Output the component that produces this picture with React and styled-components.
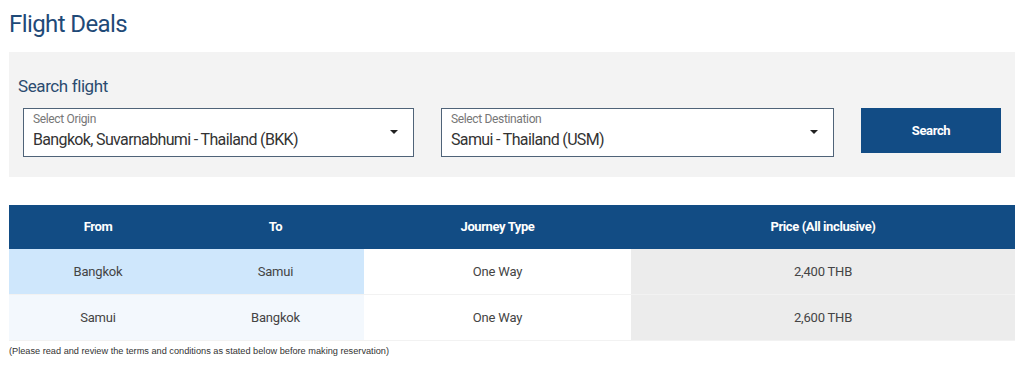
import React from "react";
import styled, { createGlobalStyle } from "styled-components";

const Global = createGlobalStyle`
  html, body { margin: 0; padding: 0; background: #fff; }
  body { font-family: Roboto, "Liberation Sans", sans-serif; }
`;

const Page = styled.div`
  padding: 9px 9px 0 9px;
  width: 1006px;
`;

const Title = styled.h1`
  margin: 0;
  font-weight: 400;
  font-size: 24px;
  line-height: 30px;
  letter-spacing: -0.6px;
  color: #1f4a78;
  height: 43px;
`;

const SearchPanel = styled.section`
  background: #f3f3f3;
  height: 125px;
  box-sizing: border-box;
  padding: 24px 14px 0 9px;
`;

const PanelTitle = styled.h2`
  margin: 0;
  font-weight: 400;
  font-size: 17px;
  line-height: 20px;
  letter-spacing: -0.4px;
  color: #2b4b6f;
  height: 32px;
`;

const FormRow = styled.div`
  display: flex;
  align-items: flex-start;
  padding-left: 5px;
`;

const Select = styled.div`
  position: relative;
  width: ${(p) => p.$w}px;
  height: 49px;
  box-sizing: border-box;
  border: 1px solid #4f6378;
  background: #fff;
  margin-right: ${(p) => p.$mr}px;
  padding: 3px 0 0 9px;
`;

const SelectLabel = styled.div`
  font-size: 12px;
  line-height: 14px;
  color: #777;
  letter-spacing: -0.35px;
`;

const SelectValue = styled.div`
  font-size: 16px;
  line-height: 20px;
  margin-top: 4px;
  color: #333;
  letter-spacing: -0.65px;
`;

const Caret = styled.span`
  position: absolute;
  right: 15px;
  top: 21px;
  width: 0;
  height: 0;
  border-left: 4px solid transparent;
  border-right: 4px solid transparent;
  border-top: 4px solid #222;
`;

const SearchButton = styled.button`
  width: 140px;
  height: 45px;
  border: none;
  background: #124c85;
  color: #fff;
  font-family: Roboto, "Liberation Sans", sans-serif;
  font-weight: 700;
  font-size: 13px;
  letter-spacing: -0.4px;
  cursor: pointer;
`;

const Table = styled.table`
  margin-top: 28px;
  width: 1006px;
  border-collapse: collapse;
  table-layout: fixed;
`;

const Th = styled.th`
  background: #124c84;
  color: #fff;
  height: 44px;
  box-sizing: border-box;
  font-weight: 700;
  font-size: 13px;
  letter-spacing: -0.4px;
  padding: 0 0 2px 0;
  text-align: center;
`;

const Td = styled.td`
  background: ${(p) => p.$bg};
  height: 45px;
  padding: 0;
  text-align: center;
  font-size: 13px;
  color: #444;
  letter-spacing: -0.2px;
  border-bottom: 1px solid #f2f2f2;
`;

const Note = styled.p`
  margin: 5px 0 0 0;
  font-family: "Liberation Sans", Arial, sans-serif;
  font-size: 9.2px;
  color: #333;
`;

const rows = [
  { from: "Bangkok", to: "Samui", type: "One Way", price: "2,400 THB", bg: "#cfe7fc" },
  { from: "Samui", to: "Bangkok", type: "One Way", price: "2,600 THB", bg: "#f3f8fd" },
];

export default function App() {
  return (
    <>
      <Global />
      <Page>
        <Title>Flight Deals</Title>
        <SearchPanel>
          <PanelTitle>Search flight</PanelTitle>
          <FormRow>
            <Select $w={391} $mr={27}>
              <SelectLabel>Select Origin</SelectLabel>
              <SelectValue>Bangkok, Suvarnabhumi - Thailand (BKK)</SelectValue>
              <Caret />
            </Select>
            <Select $w={393} $mr={27}>
              <SelectLabel>Select Destination</SelectLabel>
              <SelectValue>Samui - Thailand (USM)</SelectValue>
              <Caret />
            </Select>
            <SearchButton>Search</SearchButton>
          </FormRow>
        </SearchPanel>
        <Table>
          <colgroup>
            <col style={{ width: 178 }} />
            <col style={{ width: 177 }} />
            <col style={{ width: 267 }} />
            <col style={{ width: 384 }} />
          </colgroup>
          <thead>
            <tr>
              <Th>From</Th>
              <Th>To</Th>
              <Th>Journey Type</Th>
              <Th>Price (All inclusive)</Th>
            </tr>
          </thead>
          <tbody>
            {rows.map((r) => (
              <tr key={r.from}>
                <Td $bg={r.bg}>{r.from}</Td>
                <Td $bg={r.bg}>{r.to}</Td>
                <Td $bg="#fff">{r.type}</Td>
                <Td $bg="#ececec">{r.price}</Td>
              </tr>
            ))}
          </tbody>
        </Table>
        <Note>(Please read and review the terms and conditions as stated below before making reservation)</Note>
      </Page>
    </>
  );
}
